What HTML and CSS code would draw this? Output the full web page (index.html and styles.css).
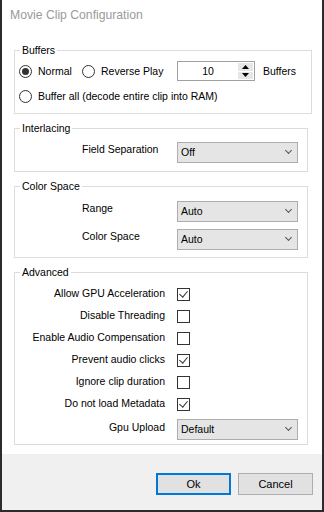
FILE: index.html
```html
<!DOCTYPE html>
<html lang="en">
<head>
    <meta charset="UTF-8">
    <meta name="viewport" content="width=device-width, initial-scale=1.0">
    <title>Movie Clip Configuration</title>
    <link rel="stylesheet" href="styles.css">
</head>
<body>
    <div class="window">
        <div class="titlebar">Movie Clip Configuration</div>

        <div class="content">
            <div class="group group-wide buffers">
                <span class="legend">Buffers</span>
                <div class="radio-row">
                    <label class="radio checked radio-normal"><span class="dot"></span>Normal</label>
                    <label class="radio radio-reverse"><span class="dot"></span>Reverse Play</label>
                    <div class="spin">
                        <span class="spin-value">10</span>
                        <span class="spin-btns">
                            <span class="spin-btn"><svg width="7" height="4" viewBox="0 0 7 4"><path d="M3.5 0 L7 4 L0 4 Z" fill="#000"/></svg></span>
                            <span class="spin-btn"><svg width="7" height="4" viewBox="0 0 7 4"><path d="M0 0 L7 0 L3.5 4 Z" fill="#000"/></svg></span>
                        </span>
                    </div>
                    <span class="spin-label">Buffers</span>
                </div>
                <div class="radio-row">
                    <label class="radio"><span class="dot"></span>Buffer all (decode entire clip into RAM)</label>
                </div>
            </div>

            <div class="group interlacing">
                <span class="legend">Interlacing</span>
                <div class="form-grid left-labels">
                    <span class="label">Field Separation</span>
                    <div class="combo">Off<span class="chevron"></span></div>
                </div>
            </div>

            <div class="group colorspace">
                <span class="legend">Color Space</span>
                <div class="form-grid left-labels">
                    <span class="label">Range</span>
                    <div class="combo">Auto<span class="chevron"></span></div>
                    <span class="label">Color Space</span>
                    <div class="combo">Auto<span class="chevron"></span></div>
                </div>
            </div>

            <div class="group advanced">
                <span class="legend">Advanced</span>
                <div class="check-grid">
                    <span class="label">Allow GPU Acceleration</span>
                    <span class="check checked"></span>
                    <span class="label">Disable Threading</span>
                    <span class="check"></span>
                    <span class="label">Enable Audio Compensation</span>
                    <span class="check"></span>
                    <span class="label">Prevent audio clicks</span>
                    <span class="check checked"></span>
                    <span class="label">Ignore clip duration</span>
                    <span class="check"></span>
                    <span class="label">Do not load Metadata</span>
                    <span class="check checked"></span>
                    <span class="label combo-label">Gpu Upload</span>
                    <div class="combo combo-row">Default<span class="chevron"></span></div>
                </div>
            </div>
        </div>

        <div class="footer">
            <button class="btn btn-default">Ok</button>
            <button class="btn">Cancel</button>
        </div>
    </div>
</body>
</html>
```

FILE: styles.css
```css
body {
    margin: 0;
    font-family: "Liberation Sans", Arial, sans-serif;
    font-size: 10.5px;
    color: #000;
    background-color: #fff;
}

.window {
    width: 324px;
    height: 512px;
    box-sizing: border-box;
    border: 2px solid #2b2b2b;
    border-top: none;
    display: flex;
    flex-direction: column;
    background-color: #fff;
}

.titlebar {
    height: 30px;
    line-height: 30px;
    padding-left: 8px;
    font-size: 12.2px;
    color: #9a9a9a;
}

.content {
    height: 424px;
    padding: 20px 0 0 12px;
    box-sizing: border-box;
    display: flex;
    flex-direction: column;
    gap: 14px;
}

.group {
    position: relative;
    width: 294px;
    box-sizing: border-box;
    border: 1px solid #dcdcdc;
}

.group-wide {
    width: 298px;
}

.legend {
    position: absolute;
    top: -7px;
    left: 5px;
    padding: 0 2px;
    line-height: 13px;
    background-color: #fff;
}

/* Buffers */
.buffers {
    height: 64px;
    padding: 10px 0 0 4px;
    display: flex;
    flex-direction: column;
    gap: 5px;
}

.radio-row {
    display: flex;
    align-items: center;
    height: 20px;
}

.radio {
    display: flex;
    align-items: center;
    gap: 6px;
}

.radio-normal {
    width: 63px;
}

.radio-reverse {
    width: 95px;
}

.dot {
    width: 13px;
    height: 13px;
    box-sizing: border-box;
    border: 1px solid #333;
    border-radius: 50%;
    background-color: #fff;
    display: flex;
    align-items: center;
    justify-content: center;
}

.radio.checked .dot::after {
    content: "";
    width: 7px;
    height: 7px;
    border-radius: 50%;
    background-color: #333;
}

.spin {
    width: 78px;
    height: 20px;
    box-sizing: border-box;
    border: 1px solid #a0a0a0;
    display: flex;
}

.spin-value {
    flex: 1;
    text-align: center;
    line-height: 18px;
}

.spin-btns {
    width: 15px;
    display: flex;
    flex-direction: column;
    gap: 1px;
    background-color: #fff;
    padding: 1px 1px 1px 0;
}

.spin-btn {
    flex: 1;
    background-color: #e6e6e6;
    display: flex;
    align-items: center;
    justify-content: center;
}

.spin-label {
    margin-left: 8px;
}

/* label + control grids */
.form-grid,
.check-grid {
    display: grid;
    grid-template-columns: 150px 121px;
    column-gap: 12px;
}

.label {
    padding-top: 1px;
    line-height: 13px;
}

.left-labels .label {
    padding-left: 67px;
}

.interlacing {
    height: 44px;
    padding-top: 13px;
}

.colorspace {
    height: 72px;
    padding-top: 14px;
}

.colorspace .form-grid {
    row-gap: 7px;
}

.combo {
    position: relative;
    height: 21px;
    box-sizing: border-box;
    border: 1px solid #adadad;
    background-color: #e5e5e5;
    padding-left: 3px;
    line-height: 19px;
}

.chevron {
    position: absolute;
    right: 6px;
    top: 5px;
    width: 4px;
    height: 4px;
    border-right: 1px solid #555;
    border-bottom: 1px solid #555;
    transform: rotate(45deg);
}

/* Advanced */
.advanced {
    height: 173px;
    padding-top: 10px;
}

.check-grid {
    grid-auto-rows: 22px;
}

.check-grid .label {
    text-align: right;
    padding-top: 4px;
}

.check {
    width: 13px;
    height: 13px;
    box-sizing: border-box;
    border: 1px solid #333;
    align-self: center;
    position: relative;
}

.check.checked::after {
    content: "";
    position: absolute;
    left: 3px;
    top: 0px;
    width: 4px;
    height: 7px;
    border-right: 1px solid #333;
    border-bottom: 1px solid #333;
    transform: rotate(40deg);
}

.check-grid .combo-label {
    margin-top: 4px;
    padding-top: 2px;
}

.combo-row {
    margin-top: 4px;
}

/* buttons */
.footer {
    flex: 1;
    background-color: #f0f0f0;
    display: flex;
    justify-content: flex-end;
    align-items: flex-start;
    gap: 7px;
    padding: 19px 9px 0 0;
}

.btn {
    width: 75px;
    height: 22px;
    box-sizing: border-box;
    border: 1px solid #adadad;
    background-color: #e1e1e1;
    font-family: "Liberation Sans", Arial, sans-serif;
    font-size: 11px;
    color: #000;
    padding: 0;
}

.btn-default {
    border: 2px solid #0078d7;
}
```
